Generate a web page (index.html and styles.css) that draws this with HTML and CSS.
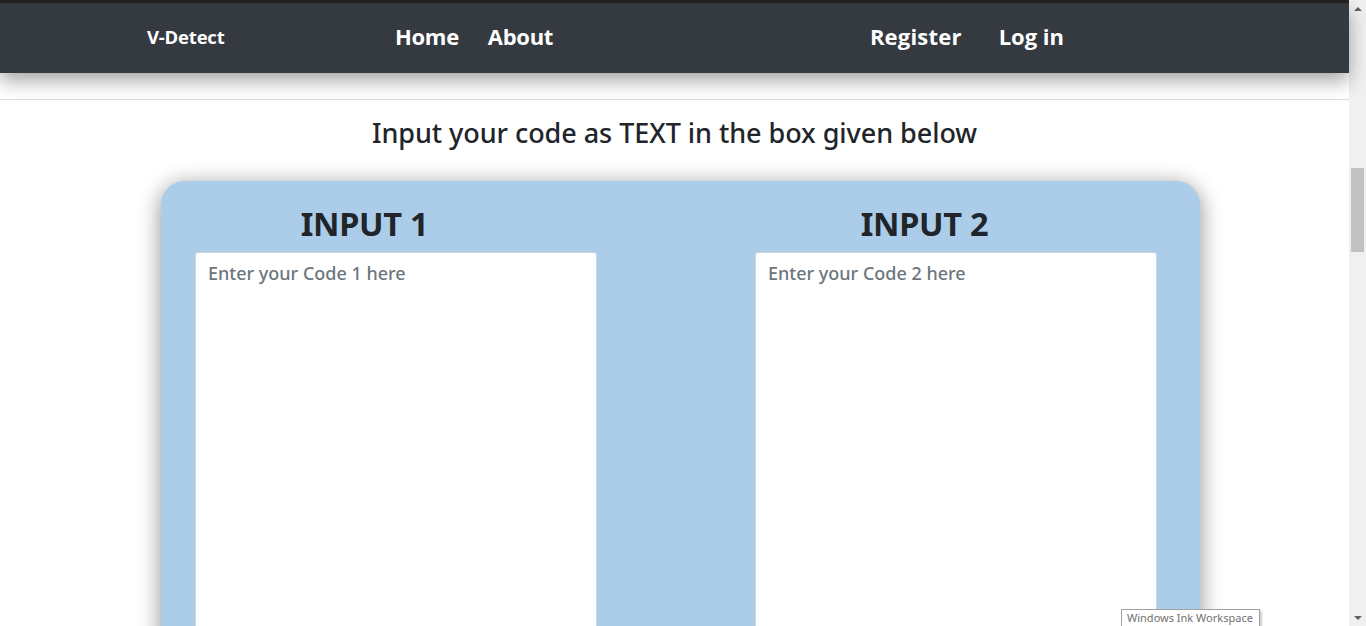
FILE: index.html
```html
<!DOCTYPE html>
<html lang="en">
<head>
<meta charset="utf-8">
<title>V-Detect</title>
<link rel="stylesheet" href="styles.css">
</head>
<body>
<div class="window">
  <div class="page">
    <div class="topstrip"></div>
    <nav class="navbar">
      <a class="brand" href="#">V-Detect</a>
      <div class="nav-left">
        <a class="nav-link" href="#">Home</a>
        <a class="nav-link" href="#">About</a>
      </div>
      <div class="nav-right">
        <a class="nav-link" href="#">Register</a>
        <a class="nav-link" href="#">Log in</a>
      </div>
    </nav>
    <hr class="rule">
    <h2 class="lead">Input your code as TEXT in the box given below</h2>
    <section class="card">
      <div class="col">
        <h1 class="col-title">INPUT 1</h1>
        <textarea class="code" placeholder="Enter your Code 1 here"></textarea>
      </div>
      <div class="col">
        <h1 class="col-title">INPUT 2</h1>
        <textarea class="code" placeholder="Enter your Code 2 here"></textarea>
      </div>
    </section>
  </div>
  <div class="scrollbar">
    <div class="arrow up"></div>
    <div class="track"><div class="thumb"></div></div>
    <div class="arrow down"></div>
  </div>
  <div class="tooltip">Windows Ink Workspace</div>
</div>
</body>
</html>
```

FILE: styles.css
```css
html, body {
  margin: 0;
  padding: 0;
  height: 626px;
  overflow: hidden;
  background: #fff;
}
.window {
  display: flex;
  height: 626px;
  position: relative;
  overflow: hidden;
}
.page {
  flex: 1;
  min-width: 0;
  font-family: "Noto Sans", "Open Sans", sans-serif;
  color: #212529;
}
.topstrip {
  height: 3px;
  background: #232323;
}
.navbar {
  height: 70px;
  box-sizing: border-box;
  padding-bottom: 4px;
  background: #343a40;
  display: flex;
  align-items: center;
  box-shadow: 0 8px 18px rgba(0, 0, 0, 0.35);
  position: relative;
  z-index: 2;
  font-family: "Open Sans", "Noto Sans", sans-serif;
  font-weight: 700;
}
.navbar a {
  color: #fff;
  text-decoration: none;
}
.brand {
  margin-left: 147px;
  font-size: 18.5px;
  width: 248px;
  letter-spacing: -0.2px;
}
.nav-left, .nav-right {
  display: flex;
  gap: 29px;
}
.nav-right {
  margin-left: auto;
  margin-right: 285px;
  gap: 37px;
}
.nav-link {
  font-size: 22px;
  letter-spacing: -0.3px;
}
.nav-right .nav-link:first-child {
  letter-spacing: 0.2px;
}
.nav-right .nav-link:last-child {
  letter-spacing: 0;
}
.rule {
  margin: 26px 0 0;
  border: 0;
  border-top: 1px solid #dcdcdc;
}
.lead {
  margin: 16px 0 0;
  text-align: center;
  font-size: 27px;
  font-weight: 500;
  line-height: 34px;
  letter-spacing: -0.05px;
}
.card {
  margin: 31px 0 0 161px;
  width: 1039px;
  height: 600px;
  box-sizing: border-box;
  background: #abcde9;
  border-radius: 24px;
  box-shadow: 0 4px 22px rgba(0, 0, 0, 0.45);
  padding: 21px 0 0 34px;
  display: flex;
  gap: 158px;
}
.col {
  width: 402px;
  display: flex;
  flex-direction: column;
}
.col-title {
  margin: 0 63px 6px 0;
  text-align: center;
  font-size: 32.5px;
  font-weight: 700;
  line-height: 44px;
  letter-spacing: -0.3px;
}
.code {
  width: 402px;
  height: 420px;
  box-sizing: border-box;
  border: 1px solid #ced4da;
  border-radius: 3px;
  background: #fff;
  padding: 8px 12px;
  font-family: "Noto Sans", "Open Sans", sans-serif;
  font-size: 18px;
  font-weight: 500;
  resize: none;
  outline: none;
}
.code::placeholder {
  color: #6c757d;
  opacity: 1;
}
.scrollbar {
  width: 17px;
  background: #f0f0f0;
  display: flex;
  flex-direction: column;
}
.arrow {
  height: 17px;
  display: flex;
  align-items: center;
  justify-content: center;
}
.arrow.up::before {
  content: "";
  border-left: 4px solid transparent;
  border-right: 4px solid transparent;
  border-bottom: 4px solid #606060;
}
.arrow.down::before {
  content: "";
  border-left: 4px solid transparent;
  border-right: 4px solid transparent;
  border-top: 4px solid #606060;
}
.track {
  flex: 1;
  padding: 151px 2px 0;
}
.thumb {
  height: 84px;
  background: #c1c1c1;
}
.tooltip {
  position: absolute;
  left: 1121px;
  top: 609px;
  padding: 1px 6px 3px 5px;
  border: 1px solid #a0a0a0;
  background: #fff;
  color: #707070;
  font-family: "Noto Sans", sans-serif;
  font-size: 11px;
  line-height: 14px;
  box-shadow: 2px 2px 2px rgba(0, 0, 0, 0.2);
}
```
